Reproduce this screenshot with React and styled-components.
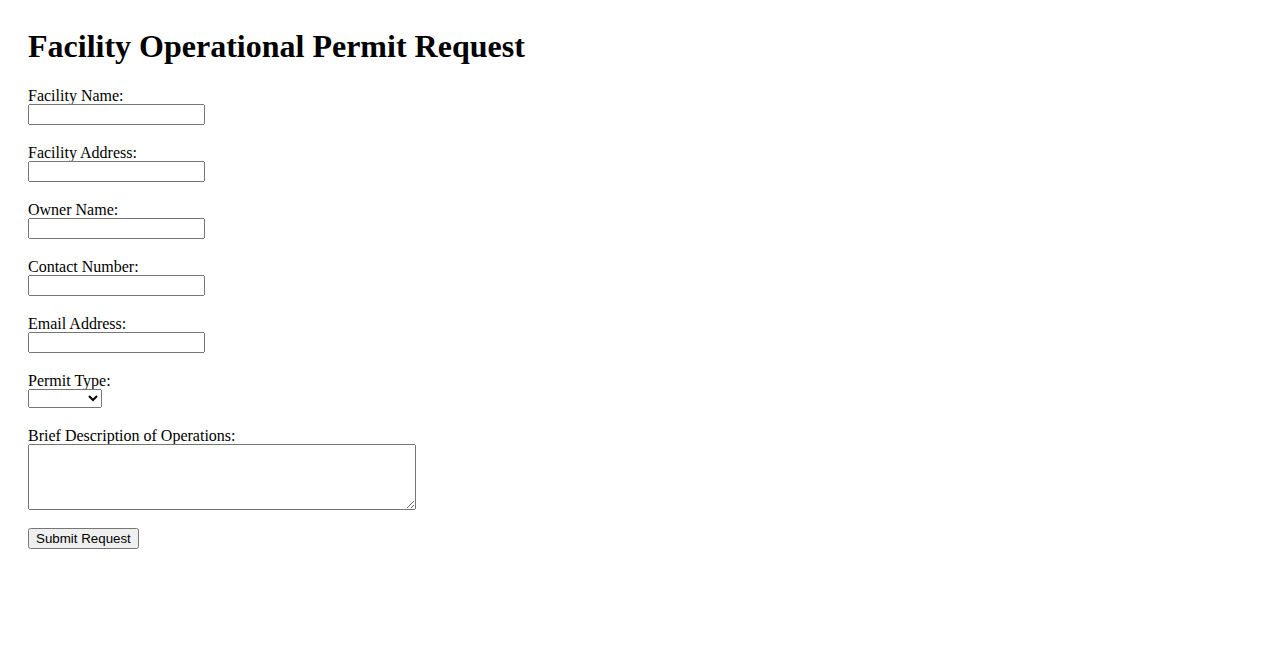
import React from 'react'
import styled, { createGlobalStyle } from 'styled-components'

const GlobalStyle = createGlobalStyle`
  body {
    margin: 0;
    background: #fff;
    color: #000;
    font-family: "Liberation Serif", "Times New Roman", serif;
    font-size: 16px;
  }
`

const Page = styled.div`
  padding: 28px;
`

const Title = styled.h1`
  margin: 0 0 21px;
  font-size: 32px;
  font-weight: bold;
  line-height: 37px;
`

const Form = styled.form`
  display: flex;
  flex-direction: column;
  align-items: flex-start;
`

const Field = styled.div`
  display: flex;
  flex-direction: column;
  align-items: flex-start;
  margin-bottom: 18px;
`

const Label = styled.label`
  display: block;
  padding-top: 1px;
  line-height: 17px;
`

const TextInput = styled.input`
  box-sizing: border-box;
  width: 177px;
  height: 21px;
  margin: 0;
  font-family: "Liberation Sans", Arial, sans-serif;
  font-size: 13.33px;
`

const Select = styled.select`
  box-sizing: border-box;
  width: 74px;
  height: 19px;
  margin: 0;
  font-family: "Liberation Sans", Arial, sans-serif;
  font-size: 13.33px;
`

const TextArea = styled.textarea`
  box-sizing: border-box;
  width: 388px;
  height: 66px;
  margin: 0;
  font-family: "Liberation Mono", monospace;
  font-size: 13.33px;
`

const SubmitButton = styled.button`
  box-sizing: border-box;
  height: 21px;
  margin: 0;
  font-family: "Liberation Sans", Arial, sans-serif;
  font-size: 13.33px;
`

const fields = [
  { id: 'facilityName', label: 'Facility Name:' },
  { id: 'facilityAddress', label: 'Facility Address:' },
  { id: 'ownerName', label: 'Owner Name:' },
  { id: 'contactNumber', label: 'Contact Number:' },
  { id: 'email', label: 'Email Address:' },
]

const App = () => {
  const handleSubmit = e => {
    e.preventDefault()
  }

  return (
    <Page>
      <GlobalStyle />
      <Title>Facility Operational Permit Request</Title>
      <Form onSubmit={handleSubmit}>
        {fields.map(f => (
          <Field key={f.id}>
            <Label htmlFor={f.id}>{f.label}</Label>
            <TextInput id={f.id} type="text" />
          </Field>
        ))}
        <Field>
          <Label htmlFor="permitType">Permit Type:</Label>
          <Select id="permitType" defaultValue="">
            <option value=""></option>
            <option value="new">New</option>
            <option value="renewal">Renewal</option>
          </Select>
        </Field>
        <Field>
          <Label htmlFor="description">Brief Description of Operations:</Label>
          <TextArea id="description" />
        </Field>
        <SubmitButton type="submit">Submit Request</SubmitButton>
      </Form>
    </Page>
  )
}

export default App
